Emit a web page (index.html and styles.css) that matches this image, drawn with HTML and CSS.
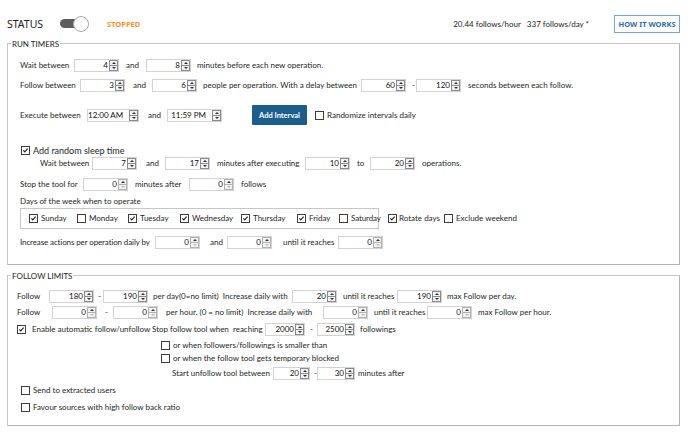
FILE: index.html
```html
<!DOCTYPE html>
<html>
<head>
<meta charset="utf-8">
<link rel="stylesheet" href="styles.css">
</head>
<body>
<div class="page">
  <header class="top">
    <span class="status">STATUS</span>
    <span class="toggle"><span class="track"></span><span class="thumb"></span></span>
    <span class="state">STOPPED</span>
    <span class="stats">20.44 follows/hour&nbsp;&nbsp; 337 follows/day *</span>
    <span class="how">HOW IT WORKS</span>
  </header>

  <section class="group g1">
    <div class="gtitle">RUN TIMERS</div>

    <div class="row mt8 h14 pl12">
      <span class="t w54">Wait between</span>
      <span class="num"><span class="v">4</span><span class="sp"><span class="up"></span><span class="dn"></span></span></span>
      <span class="t ml7 w20">and</span>
      <span class="num"><span class="v">8</span><span class="sp"><span class="up"></span><span class="dn"></span></span></span>
      <span class="t ml6">minutes before each new operation.</span>
    </div>

    <div class="row mt6 h14 pl12">
      <span class="t w60">Follow between</span>
      <span class="num"><span class="v">3</span><span class="sp"><span class="up"></span><span class="dn"></span></span></span>
      <span class="t ml8 w19">and</span>
      <span class="num"><span class="v">6</span><span class="sp"><span class="up"></span><span class="dn"></span></span></span>
      <span class="t ml6 w158">people per operation. With a delay between</span>
      <span class="num"><span class="v">60</span><span class="sp"><span class="up"></span><span class="dn"></span></span></span>
      <span class="t ml6 w4">-</span>
      <span class="num"><span class="v">120</span><span class="sp"><span class="up"></span><span class="dn"></span></span></span>
      <span class="t ml7">seconds between each follow.</span>
    </div>

    <div class="row mt13 h20 pl12">
      <span class="t w67">Execute between</span>
      <span class="num time w52"><span class="v">12:00 AM</span><span class="sp"><span class="up"></span><span class="dn"></span></span></span>
      <span class="t ml9 w19">and</span>
      <span class="num time w55"><span class="v">11:59 PM</span><span class="sp"><span class="up"></span><span class="dn"></span></span></span>
      <span class="btn ml30">Add Interval</span>
      <span class="cb ml8"></span>
      <span class="t ml3">Randomize intervals daily</span>
    </div>

    <div class="row mt19 h12 pl13">
      <span class="cb on"><svg viewBox="0 0 9 9"><path d="M1.8 4.4 L3.6 6.4 L7.2 2.2"/></svg></span>
      <span class="t ml3 big">Add random sleep time</span>
    </div>

    <div class="row mt0 h14 pl32">
      <span class="t w52">Wait between</span>
      <span class="num"><span class="v">7</span><span class="sp"><span class="up"></span><span class="dn"></span></span></span>
      <span class="t ml9 w19">and</span>
      <span class="num"><span class="v">17</span><span class="sp"><span class="up"></span><span class="dn"></span></span></span>
      <span class="t ml7 w88">minutes after executing</span>
      <span class="num"><span class="v">10</span><span class="sp"><span class="up"></span><span class="dn"></span></span></span>
      <span class="t ml7 w13">to</span>
      <span class="num"><span class="v">20</span><span class="sp"><span class="up"></span><span class="dn"></span></span></span>
      <span class="t ml7">operations.</span>
    </div>

    <div class="row mt7 h14 pl12">
      <span class="t w63">Stop the tool for</span>
      <span class="num"><span class="v">0</span><span class="sp off"><span class="up"></span><span class="dn"></span></span></span>
      <span class="t ml7 w54">minutes after</span>
      <span class="num"><span class="v">0</span><span class="sp off"><span class="up"></span><span class="dn"></span></span></span>
      <span class="t ml7">follows</span>
    </div>

    <div class="row mt5 h10 pl12">
      <span class="t">Days of the week when to operate</span>
    </div>

    <div class="row mt2 h21 pl12">
      <div class="days">
        <span class="day"><span class="cb on"><svg viewBox="0 0 9 9"><path d="M1.8 4.4 L3.6 6.4 L7.2 2.2"/></svg></span><span class="t ml3 w36">Sunday</span></span>
        <span class="day"><span class="cb"></span><span class="t ml3 w39">Monday</span></span>
        <span class="day"><span class="cb on"><svg viewBox="0 0 9 9"><path d="M1.8 4.4 L3.6 6.4 L7.2 2.2"/></svg></span><span class="t ml3 w40">Tuesday</span></span>
        <span class="day"><span class="cb on"><svg viewBox="0 0 9 9"><path d="M1.8 4.4 L3.6 6.4 L7.2 2.2"/></svg></span><span class="t ml3 w49">Wednesday</span></span>
        <span class="day"><span class="cb on"><svg viewBox="0 0 9 9"><path d="M1.8 4.4 L3.6 6.4 L7.2 2.2"/></svg></span><span class="t ml3 w44">Thursday</span></span>
        <span class="day"><span class="cb on"><svg viewBox="0 0 9 9"><path d="M1.8 4.4 L3.6 6.4 L7.2 2.2"/></svg></span><span class="t ml3 w30">Friday</span></span>
        <span class="day"><span class="cb"></span><span class="t ml3 tight">Saturday</span></span>
      </div>
      <span class="cb on ml9"><svg viewBox="0 0 9 9"><path d="M1.8 4.4 L3.6 6.4 L7.2 2.2"/></svg></span>
      <span class="t ml2 w45">Rotate days</span>
      <span class="cb"></span>
      <span class="t ml3">Exclude weekend</span>
    </div>

    <div class="row mt6 h14 pl12">
      <span class="t w135 tight">Increase actions per operation daily by</span>
      <span class="num"><span class="v">0</span><span class="sp off"><span class="up"></span><span class="dn"></span></span></span>
      <span class="t ml10 w17">and</span>
      <span class="num"><span class="v">0</span><span class="sp off"><span class="up"></span><span class="dn"></span></span></span>
      <span class="t ml11 w55">until it reaches</span>
      <span class="num"><span class="v">0</span><span class="sp off"><span class="up"></span><span class="dn"></span></span></span>
    </div>
  </section>

  <section class="group g2">
    <div class="gtitle">FOLLOW LIMITS</div>

    <div class="row mt7 h14 pl9">
      <span class="t w32">Follow</span>
      <span class="num"><span class="v">180</span><span class="sp"><span class="up"></span><span class="dn"></span></span></span>
      <span class="t ml4 w5">-</span>
      <span class="num"><span class="v">190</span><span class="sp"><span class="up"></span><span class="dn"></span></span></span>
      <span class="t ml5 w139">per day(0=no limit)&nbsp; Increase daily with</span>
      <span class="num"><span class="v">20</span><span class="sp"><span class="up"></span><span class="dn"></span></span></span>
      <span class="t ml6 w54">until it reaches</span>
      <span class="num"><span class="v">190</span><span class="sp"><span class="up"></span><span class="dn"></span></span></span>
      <span class="t ml5">max Follow per day.</span>
    </div>

    <div class="row mt2 h14 pl9">
      <span class="t w35">Follow</span>
      <span class="num"><span class="v">0</span><span class="sp off"><span class="up"></span><span class="dn"></span></span></span>
      <span class="t ml8 w8">-</span>
      <span class="num"><span class="v">0</span><span class="sp off"><span class="up"></span><span class="dn"></span></span></span>
      <span class="t ml8 w157">per hour. (0 = no limit)&nbsp; Increase daily with</span>
      <span class="num"><span class="v">0</span><span class="sp off"><span class="up"></span><span class="dn"></span></span></span>
      <span class="t ml6 w53">until it reaches</span>
      <span class="num"><span class="v">0</span><span class="sp off"><span class="up"></span><span class="dn"></span></span></span>
      <span class="t ml6">max Follow per hour.</span>
    </div>

    <div class="row mt3 h14 pl9">
      <span class="cb on"><svg viewBox="0 0 9 9"><path d="M1.8 4.4 L3.6 6.4 L7.2 2.2"/></svg></span>
      <span class="t ml6 w120">Enable automatic follow/unfollow</span>
      <span class="t w113">Stop follow tool when&nbsp; reaching</span>
      <span class="num w40"><span class="v">2000</span><span class="sp"><span class="up"></span><span class="dn"></span></span></span>
      <span class="t ml5 w7">-</span>
      <span class="num w38"><span class="v">2500</span><span class="sp"><span class="up"></span><span class="dn"></span></span></span>
      <span class="t ml5">followings</span>
    </div>

    <div class="row mt3 h12 pl153">
      <span class="cb"></span>
      <span class="t ml3">or when followers/followings is smaller than</span>
    </div>

    <div class="row mt1 h12 pl153">
      <span class="cb"></span>
      <span class="t ml3">or when the follow tool gets temporary blocked</span>
    </div>

    <div class="row mt2 h14 pl164">
      <span class="t w101">Start unfollow tool between</span>
      <span class="num w37"><span class="v">20</span><span class="sp"><span class="up"></span><span class="dn"></span></span></span>
      <span class="t ml4 w3">-</span>
      <span class="num w38"><span class="v">30</span><span class="sp"><span class="up"></span><span class="dn"></span></span></span>
      <span class="t ml3">minutes after</span>
    </div>

    <div class="row mt4 h12 pl13">
      <span class="cb"></span>
      <span class="t ml3">Send to extracted users</span>
    </div>

    <div class="row mt5 h12 pl13">
      <span class="cb"></span>
      <span class="t ml3">Favour sources with high follow back ratio</span>
    </div>
  </section>
</div>
</body>
</html>
```

FILE: styles.css
```css
* { box-sizing: border-box; }
html, body { margin: 0; padding: 0; background: #fff; }
body {
  font-family: Lato, "Noto Sans", sans-serif;
  font-size: 8px;
  color: #1e1e1e;
  width: 690px;
  height: 432px;
  overflow: hidden;
}
.page { padding: 14px 10px 0 7px; }

/* header */
.top { display: flex; align-items: center; height: 19px; }
.status { font-family: "Noto Sans", sans-serif; font-size: 10.5px; width: 35px; white-space: nowrap; color: #222; }
.toggle { display: flex; align-items: center; margin-left: 18px; }
.track { width: 20px; height: 9px; border-radius: 5px; background: #5e5e5e; }
.thumb { width: 16px; height: 16px; border-radius: 50%; background: #fff; border: 1px solid #a9a9a9; margin-left: -7px; }
.state { font-family: "Noto Sans", sans-serif; margin-left: 18px; color: #f7941d; font-weight: 700; font-size: 7.5px; }
.stats { margin-left: auto; white-space: nowrap; color: #222; }
.how {
  font-family: "Noto Sans", sans-serif;
  margin-left: 25px; width: 66px; height: 18px; border: 1px solid #6fa6d6;
  color: #2f6fa8; font-weight: 700; font-size: 7.5px;
  display: flex; align-items: center; justify-content: center; white-space: nowrap;
}

/* group boxes */
.group { border: 1px solid #c6c6c6; border-right-color: #b4b4b4; border-bottom-color: #b4b4b4; }
.g1 { margin-top: 10px; padding-bottom: 15px; }
.g2 { margin-top: 10px; padding-bottom: 12px; }
.gtitle {
  margin: -5px 0 0 3px; width: fit-content; padding: 0 1px;
  line-height: 11px; background: #fff; color: #222; white-space: nowrap;
}

/* rows */
.row { display: flex; align-items: center; white-space: nowrap; }
.t { flex: none; white-space: nowrap; line-height: 11px; }
.tight { letter-spacing: -0.12px; }
.big { font-size: 9px; }

/* numeric up/down */
.num {
  flex: none; display: flex; align-items: center;
  width: 45px; height: 13px; border: 1px solid #d3d3d3; background: #fff;
  color: #111;
}
.num .v { flex: 1; text-align: right; padding-right: 1px; line-height: 11px; }
.num.time .v { padding-right: 6px; }
.sp {
  flex: none; width: 9px; height: 11px; border: 1px solid #8a8a8a; background: #f2f2f2;
  display: flex; flex-direction: column;
}
.sp span { flex: 1; display: flex; align-items: center; justify-content: center; }
.sp .dn { border-top: 1px solid #8a8a8a; }
.sp .up::before {
  content: ""; border-left: 2.5px solid transparent; border-right: 2.5px solid transparent;
  border-bottom: 2.5px solid #333;
}
.sp .dn::before {
  content: ""; border-left: 2.5px solid transparent; border-right: 2.5px solid transparent;
  border-top: 2.5px solid #333;
}
.sp.off { border-color: #b0b0b0; }
.sp.off .dn { border-top-color: #b0b0b0; }
.sp.off .dn::before { border-top-color: #b8b8b8; }

/* checkbox */
.cb {
  flex: none; width: 9px; height: 9px; border: 1px solid #3c3c3c; background: #fff;
  display: flex; align-items: center; justify-content: center;
}
.cb svg { width: 7px; height: 7px; display: block; }
.cb path { fill: none; stroke: #1e1e1e; stroke-width: 1.4; }

/* button */
.btn {
  flex: none; width: 55px; height: 20px; background: #1b5e8e; color: #fff;
  font-weight: 700; font-size: 7.5px; display: flex; align-items: center; justify-content: center;
  border-radius: 1px;
}

/* days box */
.days {
  flex: none; width: 359px; height: 21px; border: 1px solid #c6c6c6;
  display: flex; align-items: center; padding-left: 8px;
}
.day { display: flex; align-items: center; }

/* utilities */
.h10 { height: 10px; } .h12 { height: 12px; } .h14 { height: 14px; } .h20 { height: 20px; } .h21 { height: 21px; }
.mt0 { margin-top: 0; } .mt1 { margin-top: 1px; } .mt2 { margin-top: 2px; } .mt3 { margin-top: 3px; }
.mt4 { margin-top: 4px; } .mt5 { margin-top: 5px; } .mt6 { margin-top: 6px; } .mt7 { margin-top: 7px; }
.mt8 { margin-top: 8px; } .mt13 { margin-top: 13px; } .mt19 { margin-top: 19px; }
.pl9 { padding-left: 9px; } .pl12 { padding-left: 12px; } .pl13 { padding-left: 13px; }
.pl32 { padding-left: 32px; } .pl153 { padding-left: 153px; } .pl164 { padding-left: 164px; }
.ml2 { margin-left: 2px; } .ml3 { margin-left: 3px; } .ml4 { margin-left: 4px; } .ml5 { margin-left: 5px; }
.ml6 { margin-left: 6px; } .ml7 { margin-left: 7px; } .ml8 { margin-left: 8px; } .ml9 { margin-left: 9px; }
.ml10 { margin-left: 10px; } .ml11 { margin-left: 11px; } .ml30 { margin-left: 30px; }
.w3 { width: 3px; } .w4 { width: 4px; } .w5 { width: 5px; } .w7 { width: 7px; } .w8 { width: 8px; }
.w13 { width: 13px; } .w17 { width: 17px; } .w19 { width: 19px; } .w20 { width: 20px; }
.w30 { width: 30px; } .w32 { width: 32px; } .w35 { width: 35px; } .w36 { width: 36px; }
.w37 { width: 37px; } .w38 { width: 38px; } .w39 { width: 39px; } .w40 { width: 40px; }
.w44 { width: 44px; } .w45 { width: 45px; } .w49 { width: 49px; } .w52 { width: 52px; }
.w53 { width: 53px; } .w54 { width: 54px; } .w55 { width: 55px; } .w60 { width: 60px; }
.w63 { width: 63px; } .w67 { width: 67px; } .w88 { width: 88px; } .w101 { width: 101px; }
.w113 { width: 113px; } .w120 { width: 120px; } .w135 { width: 135px; } .w139 { width: 139px; }
.w157 { width: 157px; } .w158 { width: 158px; }
```
